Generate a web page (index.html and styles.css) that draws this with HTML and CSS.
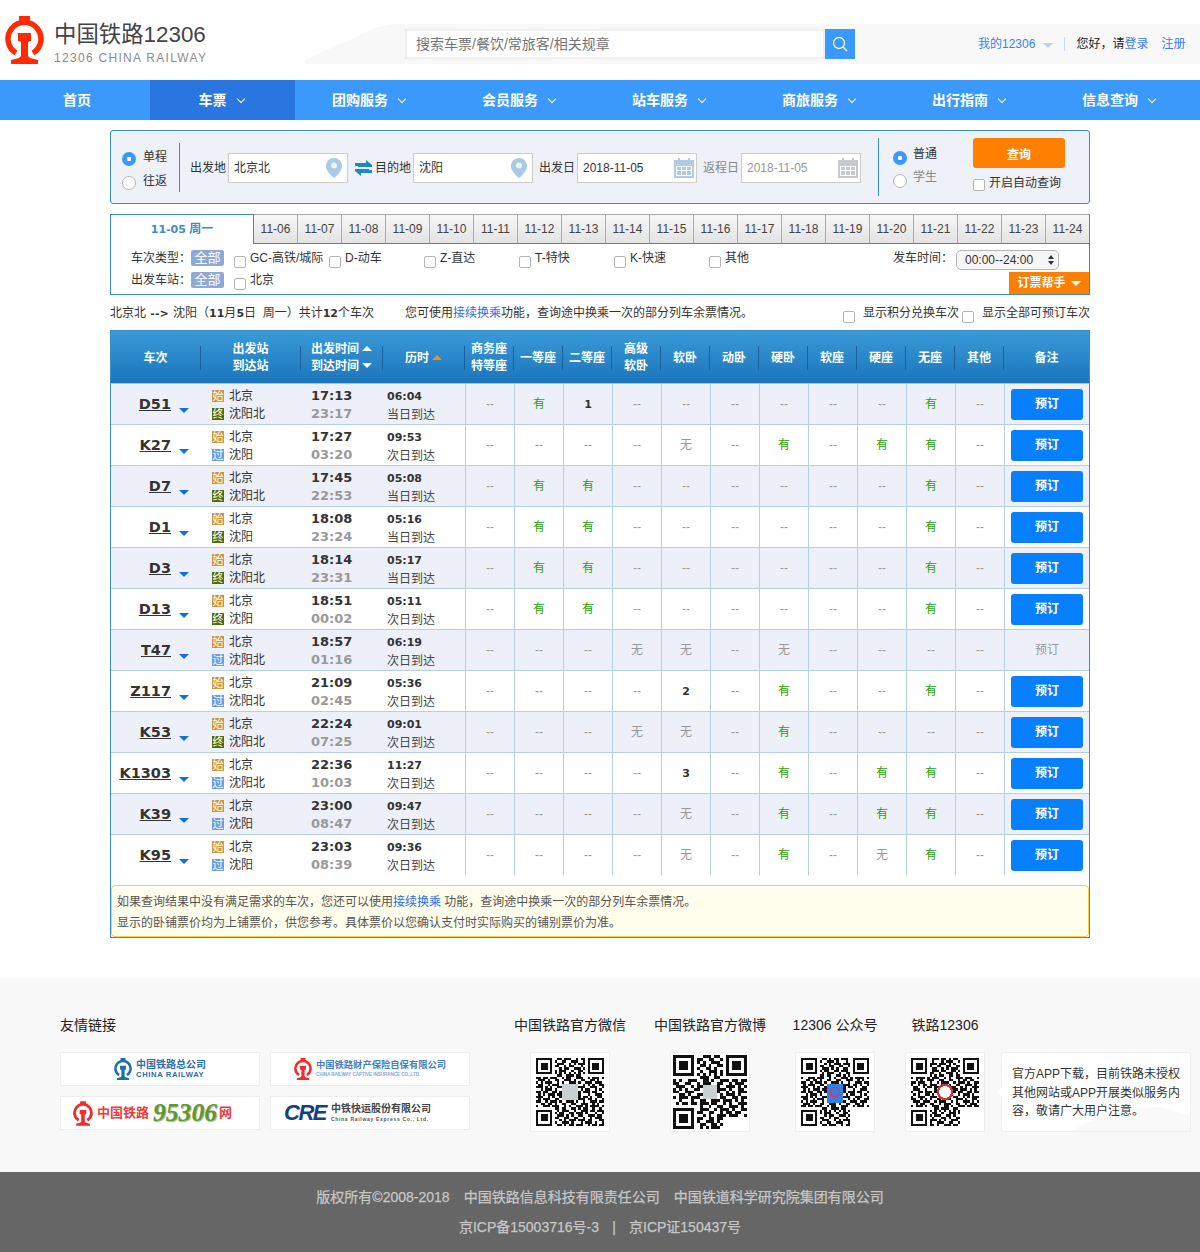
FILE: index.html
```html
<!DOCTYPE html>
<html lang="zh-CN">
<head>
<meta charset="utf-8">
<title>中国铁路12306</title>
<link rel="stylesheet" href="styles.css">
</head>
<body>
<svg class="defs" width="0" height="0" aria-hidden="true">
  <defs>
    <symbol id="ring" viewBox="0 0 39 48">
      <path d="M11 37A16.5 16.5 0 1 1 28 37" fill="none" stroke="currentColor" stroke-width="5.5"/>
      <path d="M14 0h11v6h-11z M13 17h13v8l-3 1v14l2 2 8 2v4h-27v-4l8-2 2-2v-14l-3-1z" fill="currentColor"/>
    </symbol>
    <g id="finder">
      <rect x="-1" y="-1" width="9" height="9" fill="#fff"/>
      <path d="M0 0h7v7h-7z M1 1v5h5v-5z M2 2h3v3h-3z" fill="#111" fill-rule="evenodd"/>
    </g>
    <path id="qrdata" fill="none" stroke="#111" stroke-width="1" d="M9 .5h2M12 .5h3M17 .5h1M19 .5h2M8 1.5h1M11 1.5h2M15 1.5h3M20 1.5h1M9 2.5h3M14 2.5h1M16 2.5h1M18 2.5h3M8 3.5h2M12 3.5h1M14 3.5h2M19 3.5h1M10 4.5h1M12 4.5h2M16 4.5h3M20 4.5h1M8 5.5h1M10 5.5h3M15 5.5h1M18 5.5h2M8 6.5h1M10 6.5h1M12 6.5h1M14 6.5h1M16 6.5h1M18 6.5h1M20 6.5h1M9 7.5h2M13 7.5h3M17 7.5h2M0 8.5h2M3 8.5h2M6 8.5h3M11 8.5h1M13 8.5h2M17 8.5h3M22 8.5h1M24 8.5h3M28 8.5h1M1 9.5h3M5 9.5h1M8 9.5h2M12 9.5h3M16 9.5h1M19 9.5h2M23 9.5h2M26 9.5h1M0 10.5h1M2 10.5h1M4 10.5h3M9 10.5h1M11 10.5h1M14 10.5h3M18 10.5h1M21 10.5h3M25 10.5h3M1 11.5h2M5 11.5h1M7 11.5h3M12 11.5h2M16 11.5h2M20 11.5h1M22 11.5h1M24 11.5h1M27 11.5h2M0 12.5h3M4 12.5h1M6 12.5h1M9 12.5h2M14 12.5h1M18 12.5h3M23 12.5h3M28 12.5h1M2 13.5h1M4 13.5h3M8 13.5h1M11 13.5h3M15 13.5h2M19 13.5h1M21 13.5h2M25 13.5h1M27 13.5h1M0 14.5h2M3 14.5h2M7 14.5h2M10 14.5h1M13 14.5h1M16 14.5h3M20 14.5h3M24 14.5h2M28 14.5h1M1 15.5h1M3 15.5h1M5 15.5h3M9 15.5h3M14 15.5h2M18 15.5h1M22 15.5h1M25 15.5h3M0 16.5h3M5 16.5h1M7 16.5h1M10 16.5h2M13 16.5h3M17 16.5h2M20 16.5h2M23 16.5h1M26 16.5h2M1 17.5h1M3 17.5h3M8 17.5h2M12 17.5h1M15 17.5h1M18 17.5h3M22 17.5h2M25 17.5h1M28 17.5h1M0 18.5h2M4 18.5h1M6 18.5h3M10 18.5h1M13 18.5h3M17 18.5h1M20 18.5h1M23 18.5h3M27 18.5h2M2 19.5h2M5 19.5h2M8 19.5h1M11 19.5h2M15 19.5h2M19 19.5h3M24 19.5h1M26 19.5h1M0 20.5h1M3 20.5h3M7 20.5h3M12 20.5h1M14 20.5h1M17 20.5h3M21 20.5h1M23 20.5h4M28 20.5h1M8 21.5h2M11 21.5h2M15 21.5h2M18 21.5h1M20 21.5h2M24 21.5h1M27 21.5h1M9 22.5h1M11 22.5h3M16 22.5h1M19 22.5h3M23 22.5h2M26 22.5h3M8 23.5h1M10 23.5h2M14 23.5h2M17 23.5h3M21 23.5h1M25 23.5h1M28 23.5h1M9 24.5h3M13 24.5h1M15 24.5h1M18 24.5h2M22 24.5h3M26 24.5h2M8 25.5h2M12 25.5h2M16 25.5h2M20 25.5h1M23 25.5h1M25 25.5h3M10 26.5h1M12 26.5h1M14 26.5h3M18 26.5h3M22 26.5h2M27 26.5h2M8 27.5h1M11 27.5h3M15 27.5h1M19 27.5h1M21 27.5h3M25 27.5h1M28 27.5h1M9 28.5h2M12 28.5h1M14 28.5h2M17 28.5h3M22 28.5h1M24 28.5h2M27 28.5h2"/>
    <symbol id="pin" viewBox="0 0 16 20">
      <path d="M8 0a8 8 0 0 1 8 8c0 4-4 9-8 12-4-3-8-8-8-12a8 8 0 0 1 8-8z" fill="#a9c9e4"/>
      <circle cx="8" cy="7.5" r="3" fill="#eef1f8"/>
    </symbol>
    <symbol id="cal" viewBox="0 0 20 20">
      <path d="M0 2h4v-2h2v2h8v-2h2v2h4v18h-20z" fill="currentColor"/>
      <path d="M2 8h16v10h-16z" fill="#fff"/>
      <path d="M3 9h4v3h-4zM8 9h4v3h-4zM13 9h4v3h-4zM3 13h4v4h-4zM8 13h4v4h-4zM13 13h4v4h-4z" fill="currentColor"/>
    </symbol>
  </defs>
</svg>

<header class="site-head">
  <div class="brand">
    <svg class="brand-mark"><use href="#ring"/></svg>
    <div class="brand-text">
      <div class="brand-cn">中国铁路12306</div>
      <div class="brand-en">12306 CHINA RAILWAY</div>
    </div>
  </div>
  <div class="band">
    <div class="search">
      <div class="search-input">搜索车票/餐饮/常旅客/相关规章</div>
      <div class="search-btn">
        <svg width="16" height="16" viewBox="0 0 16 16" fill="none" stroke="#fff" stroke-width="1.3"><circle cx="7" cy="7" r="5.5"/><path d="M11 11l4 4"/></svg>
      </div>
    </div>
    <div class="user-links">
      <a class="link">我的12306</a><i class="my-caret"></i><i class="user-sep"></i>
      <span class="hello">您好，请</span><a class="link">登录</a><a class="link reg">注册</a>
    </div>
  </div>
</header>

<nav class="nav">
  <a class="nav-item nav-home">首页</a>
  <a class="nav-item nav-ticket active">车票<i class="chev"></i></a>
  <a class="nav-item">团购服务<i class="chev"></i></a>
  <a class="nav-item">会员服务<i class="chev"></i></a>
  <a class="nav-item">站车服务<i class="chev"></i></a>
  <a class="nav-item">商旅服务<i class="chev"></i></a>
  <a class="nav-item">出行指南<i class="chev"></i></a>
  <a class="nav-item">信息查询<i class="chev"></i></a>
</nav>

<main class="main">
  <section class="panel">
    <div class="trip">
      <label class="opt"><input type="radio" name="trip" checked>单程</label>
      <label class="opt"><input type="radio" name="trip">往返</label>
    </div>
    <i class="vline v1"></i>
    <span class="f-label from">出发地</span>
    <div class="field"><span>北京北</span><svg class="pin"><use href="#pin"/></svg></div>
    <svg class="swap" width="17" height="16" viewBox="0 0 17 16"><path d="M0 6V3h11V0l6 5v2H3v-1zM17 10v3H6v3l-6-5V9h14v1z" fill="#1b8cc0"/></svg>
    <span class="f-label to">目的地</span>
    <div class="field"><span>沈阳</span><svg class="pin"><use href="#pin"/></svg></div>
    <span class="f-label date">出发日</span>
    <div class="field"><span>2018-11-05</span><svg class="cal"><use href="#cal"/></svg></div>
    <span class="f-label back muted">返程日</span>
    <div class="field off"><span>2018-11-05</span><svg class="cal"><use href="#cal"/></svg></div>
    <i class="vline v2"></i>
    <div class="ptype">
      <label class="opt"><input type="radio" name="ptype" checked>普通</label>
      <label class="opt muted"><input type="radio" name="ptype">学生</label>
    </div>
    <div class="query">
      <button class="query-btn" type="button">查询</button>
      <label class="auto"><input type="checkbox">开启自动查询</label>
    </div>
  </section>

  <ul class="tabs">
    <li class="tab current"><b>11-05</b> 周一</li>
    <li class="tab">11-06</li><li class="tab">11-07</li><li class="tab">11-08</li><li class="tab">11-09</li><li class="tab">11-10</li><li class="tab">11-11</li><li class="tab">11-12</li><li class="tab">11-13</li><li class="tab">11-14</li><li class="tab">11-15</li><li class="tab">11-16</li><li class="tab">11-17</li><li class="tab">11-18</li><li class="tab">11-19</li><li class="tab">11-20</li><li class="tab">11-21</li><li class="tab">11-22</li><li class="tab">11-23</li><li class="tab">11-24</li>
  </ul>

  <section class="filters">
    <div class="f-row">
      <span class="f-name">车次类型：</span><span class="all">全部</span>
      <label class="chk"><input type="checkbox">GC-高铁/城际</label>
      <label class="chk"><input type="checkbox">D-动车</label>
      <label class="chk"><input type="checkbox">Z-直达</label>
      <label class="chk"><input type="checkbox">T-特快</label>
      <label class="chk"><input type="checkbox">K-快速</label>
      <label class="chk"><input type="checkbox">其他</label>
      <span class="dep-time">发车时间：</span>
      <div class="time-select">00:00--24:00<i class="updown"></i></div>
    </div>
    <div class="f-row">
      <span class="f-name">出发车站：</span><span class="all">全部</span>
      <label class="chk"><input type="checkbox">北京</label>
      <div class="helper">订票帮手<i class="tri-down"></i></div>
    </div>
  </section>

  <div class="summary">
    <span class="sum-route">北京北 <b class="arrow">--&gt;</b> 沈阳（<b>11</b>月<b>5</b>日&nbsp; 周一）共计<b>12</b>个车次</span>
    <span class="sum-tip">您可使用<a class="link-strong">接续换乘</a>功能，查询途中换乘一次的部分列车余票情况。</span>
    <label class="sum-chk first"><input type="checkbox">显示积分兑换车次</label>
    <label class="sum-chk"><input type="checkbox">显示全部可预订车次</label>
  </div>

  <section class="result">
    <table class="trains">
      <colgroup>
        <col class="c-no"><col class="c-st"><col class="c-tm"><col class="c-tm">
        <col class="c-s"><col class="c-s"><col class="c-s"><col class="c-s"><col class="c-s"><col class="c-s"><col class="c-s"><col class="c-s"><col class="c-s"><col class="c-s"><col class="c-s">
        <col class="c-bk">
      </colgroup>
      <thead>
        <tr>
          <th><div class="th">车次</div></th>
          <th><div class="th">出发站<br>到达站</div></th>
          <th><div class="th"><span>出发时间<i class="t-up"></i><br>到达时间<i class="t-down"></i></span></div></th>
          <th><div class="th"><span>历时<i class="t-up orange"></i></span></div></th>
          <th><div class="th">商务座<br>特等座</div></th>
          <th><div class="th">一等座</div></th>
          <th><div class="th">二等座</div></th>
          <th><div class="th">高级<br>软卧</div></th>
          <th><div class="th">软卧</div></th>
          <th><div class="th">动卧</div></th>
          <th><div class="th">硬卧</div></th>
          <th><div class="th">软座</div></th>
          <th><div class="th">硬座</div></th>
          <th><div class="th">无座</div></th>
          <th><div class="th">其他</div></th>
          <th><div class="th last">备注</div></th>
        </tr>
      </thead>
      <tbody>
        <tr>
          <td class="no"><div class="no-in"><a>D51</a><i class="more"></i></div></td>
          <td class="st"><div><i class="ic shi">始</i>北京</div><div><i class="ic zhong">终</i>沈阳北</div></td>
          <td class="tm"><b>17:13</b><b class="arr">23:17</b></td>
          <td class="du"><b>06:04</b><span>当日到达</span></td>
          <td>--</td><td class="y">有</td><td class="n">1</td><td>--</td><td>--</td><td>--</td><td>--</td><td>--</td><td>--</td><td class="y">有</td><td>--</td>
          <td class="bk"><a class="book">预订</a></td>
        </tr>
        <tr>
          <td class="no"><div class="no-in"><a>K27</a><i class="more"></i></div></td>
          <td class="st"><div><i class="ic shi">始</i>北京</div><div><i class="ic guo">过</i>沈阳</div></td>
          <td class="tm"><b>17:27</b><b class="arr">03:20</b></td>
          <td class="du"><b>09:53</b><span>次日到达</span></td>
          <td>--</td><td>--</td><td>--</td><td>--</td><td class="w">无</td><td>--</td><td class="y">有</td><td>--</td><td class="y">有</td><td class="y">有</td><td>--</td>
          <td class="bk"><a class="book">预订</a></td>
        </tr>
        <tr>
          <td class="no"><div class="no-in"><a>D7</a><i class="more"></i></div></td>
          <td class="st"><div><i class="ic shi">始</i>北京</div><div><i class="ic zhong">终</i>沈阳北</div></td>
          <td class="tm"><b>17:45</b><b class="arr">22:53</b></td>
          <td class="du"><b>05:08</b><span>当日到达</span></td>
          <td>--</td><td class="y">有</td><td class="y">有</td><td>--</td><td>--</td><td>--</td><td>--</td><td>--</td><td>--</td><td class="y">有</td><td>--</td>
          <td class="bk"><a class="book">预订</a></td>
        </tr>
        <tr>
          <td class="no"><div class="no-in"><a>D1</a><i class="more"></i></div></td>
          <td class="st"><div><i class="ic shi">始</i>北京</div><div><i class="ic zhong">终</i>沈阳</div></td>
          <td class="tm"><b>18:08</b><b class="arr">23:24</b></td>
          <td class="du"><b>05:16</b><span>当日到达</span></td>
          <td>--</td><td class="y">有</td><td class="y">有</td><td>--</td><td>--</td><td>--</td><td>--</td><td>--</td><td>--</td><td class="y">有</td><td>--</td>
          <td class="bk"><a class="book">预订</a></td>
        </tr>
        <tr>
          <td class="no"><div class="no-in"><a>D3</a><i class="more"></i></div></td>
          <td class="st"><div><i class="ic shi">始</i>北京</div><div><i class="ic zhong">终</i>沈阳北</div></td>
          <td class="tm"><b>18:14</b><b class="arr">23:31</b></td>
          <td class="du"><b>05:17</b><span>当日到达</span></td>
          <td>--</td><td class="y">有</td><td class="y">有</td><td>--</td><td>--</td><td>--</td><td>--</td><td>--</td><td>--</td><td class="y">有</td><td>--</td>
          <td class="bk"><a class="book">预订</a></td>
        </tr>
        <tr>
          <td class="no"><div class="no-in"><a>D13</a><i class="more"></i></div></td>
          <td class="st"><div><i class="ic shi">始</i>北京</div><div><i class="ic zhong">终</i>沈阳</div></td>
          <td class="tm"><b>18:51</b><b class="arr">00:02</b></td>
          <td class="du"><b>05:11</b><span>次日到达</span></td>
          <td>--</td><td class="y">有</td><td class="y">有</td><td>--</td><td>--</td><td>--</td><td>--</td><td>--</td><td>--</td><td class="y">有</td><td>--</td>
          <td class="bk"><a class="book">预订</a></td>
        </tr>
        <tr>
          <td class="no"><div class="no-in"><a>T47</a><i class="more"></i></div></td>
          <td class="st"><div><i class="ic shi">始</i>北京</div><div><i class="ic guo">过</i>沈阳北</div></td>
          <td class="tm"><b>18:57</b><b class="arr">01:16</b></td>
          <td class="du"><b>06:19</b><span>次日到达</span></td>
          <td>--</td><td>--</td><td>--</td><td class="w">无</td><td class="w">无</td><td>--</td><td class="w">无</td><td>--</td><td>--</td><td>--</td><td>--</td>
          <td class="bk"><span class="book-off">预订</span></td>
        </tr>
        <tr>
          <td class="no"><div class="no-in"><a>Z117</a><i class="more"></i></div></td>
          <td class="st"><div><i class="ic shi">始</i>北京</div><div><i class="ic guo">过</i>沈阳北</div></td>
          <td class="tm"><b>21:09</b><b class="arr">02:45</b></td>
          <td class="du"><b>05:36</b><span>次日到达</span></td>
          <td>--</td><td>--</td><td>--</td><td>--</td><td class="n">2</td><td>--</td><td class="y">有</td><td>--</td><td>--</td><td class="y">有</td><td>--</td>
          <td class="bk"><a class="book">预订</a></td>
        </tr>
        <tr>
          <td class="no"><div class="no-in"><a>K53</a><i class="more"></i></div></td>
          <td class="st"><div><i class="ic shi">始</i>北京</div><div><i class="ic zhong">终</i>沈阳北</div></td>
          <td class="tm"><b>22:24</b><b class="arr">07:25</b></td>
          <td class="du"><b>09:01</b><span>次日到达</span></td>
          <td>--</td><td>--</td><td>--</td><td class="w">无</td><td class="w">无</td><td>--</td><td class="y">有</td><td>--</td><td>--</td><td>--</td><td>--</td>
          <td class="bk"><a class="book">预订</a></td>
        </tr>
        <tr>
          <td class="no"><div class="no-in"><a>K1303</a><i class="more"></i></div></td>
          <td class="st"><div><i class="ic shi">始</i>北京</div><div><i class="ic guo">过</i>沈阳北</div></td>
          <td class="tm"><b>22:36</b><b class="arr">10:03</b></td>
          <td class="du"><b>11:27</b><span>次日到达</span></td>
          <td>--</td><td>--</td><td>--</td><td>--</td><td class="n">3</td><td>--</td><td class="y">有</td><td>--</td><td class="y">有</td><td class="y">有</td><td>--</td>
          <td class="bk"><a class="book">预订</a></td>
        </tr>
        <tr>
          <td class="no"><div class="no-in"><a>K39</a><i class="more"></i></div></td>
          <td class="st"><div><i class="ic shi">始</i>北京</div><div><i class="ic guo">过</i>沈阳</div></td>
          <td class="tm"><b>23:00</b><b class="arr">08:47</b></td>
          <td class="du"><b>09:47</b><span>次日到达</span></td>
          <td>--</td><td>--</td><td>--</td><td>--</td><td class="w">无</td><td>--</td><td class="y">有</td><td>--</td><td class="y">有</td><td class="y">有</td><td>--</td>
          <td class="bk"><a class="book">预订</a></td>
        </tr>
        <tr>
          <td class="no"><div class="no-in"><a>K95</a><i class="more"></i></div></td>
          <td class="st"><div><i class="ic shi">始</i>北京</div><div><i class="ic guo">过</i>沈阳</div></td>
          <td class="tm"><b>23:03</b><b class="arr">08:39</b></td>
          <td class="du"><b>09:36</b><span>次日到达</span></td>
          <td>--</td><td>--</td><td>--</td><td>--</td><td class="w">无</td><td>--</td><td class="y">有</td><td>--</td><td class="w">无</td><td class="y">有</td><td>--</td>
          <td class="bk"><a class="book">预订</a></td>
        </tr>
      </tbody>
    </table>
    <div class="notice">
      <p>如果查询结果中没有满足需求的车次，您还可以使用<a class="link-strong">接续换乘</a> 功能，查询途中换乘一次的部分列车余票情况。</p>
      <p>显示的卧铺票价均为上铺票价，供您参考。具体票价以您确认支付时实际购买的铺别票价为准。</p>
    </div>
  </section>
</main>

<footer class="foot">
  <div class="foot-top">
    <div class="friends">
      <h3 class="foot-title">友情链接</h3>
      <div class="friend-grid">
        <a class="friend">
          <svg class="fr-ring blue"><use href="#ring"/></svg>
          <span class="fr-text"><b class="fr-a">中国铁路总公司</b><b class="fr-b">CHINA RAILWAY</b></span>
        </a>
        <a class="friend">
          <svg class="fr-ring red"><use href="#ring"/></svg>
          <span class="fr-text"><b class="fr-c">中国铁路财产保险自保有限公司</b><b class="fr-d">CHINA RAILWAY CAPTIVE INSURANCE CO.,LTD.</b></span>
        </a>
        <a class="friend fr-left-a">
          <svg class="fr-ring red big"><use href="#ring"/></svg>
          <b class="fr-e">中国铁路</b><b class="fr-f">95306</b><b class="fr-g">网</b>
        </a>
        <a class="friend fr-left-b">
          <b class="fr-h">CRE</b>
          <span class="fr-text"><b class="fr-i">中铁快运股份有限公司</b><b class="fr-j">China Railway Express Co., Ltd.</b></span>
        </a>
      </div>
    </div>
    <div class="qr-col col-a">
      <h3 class="foot-title">中国铁路官方微信</h3>
      <div class="qr">
        <svg viewBox="0 0 29 29" shape-rendering="crispEdges"><use href="#qrdata"/><use href="#finder"/><use href="#finder" x="22"/><use href="#finder" y="22"/><rect x="11" y="11" width="7" height="7" fill="#c9d0d2"/></svg>
      </div>
    </div>
    <div class="qr-col col-b">
      <h3 class="foot-title">中国铁路官方微博</h3>
      <div class="qr">
        <svg viewBox="0 0 25 25" shape-rendering="crispEdges"><use href="#qrdata" transform="translate(25 0) scale(-1 1)"/><use href="#finder"/><use href="#finder" x="18"/><use href="#finder" y="18"/><rect x="10" y="10" width="5" height="5" fill="#c9d0d2"/></svg>
      </div>
    </div>
    <div class="qr-col col-c">
      <h3 class="foot-title">12306 公众号</h3>
      <div class="qr">
        <svg viewBox="0 0 29 29" shape-rendering="crispEdges"><use href="#qrdata" transform="translate(0 29) scale(1 -1)"/><use href="#finder"/><use href="#finder" x="22"/><use href="#finder" y="22"/><rect x="11" y="11" width="7" height="8" fill="#2f80e8"/><circle cx="14.5" cy="14.5" r="2" fill="none" stroke="#e33" stroke-width=".7"/></svg>
      </div>
    </div>
    <div class="qr-col col-d">
      <h3 class="foot-title">铁路12306</h3>
      <div class="qr">
        <svg viewBox="0 0 29 29" shape-rendering="crispEdges"><use href="#qrdata" transform="translate(29 29) scale(-1 -1)"/><use href="#finder"/><use href="#finder" x="22"/><use href="#finder" y="22"/><circle cx="14.5" cy="14.5" r="3" fill="#fff" stroke="#d33" stroke-width="1"/></svg>
      </div>
    </div>
    <div class="app-note">官方APP下载，目前铁路未授权其他网站或APP开展类似服务内容，敬请广大用户注意。</div>
  </div>
  <div class="foot-bottom">
    <p>版权所有©2008-2018<span class="gap"></span>中国铁路信息科技有限责任公司<span class="gap"></span>中国铁道科学研究院集团有限公司</p>
    <p>京ICP备15003716号-3<span class="gap bar">|</span>京ICP证150437号</p>
  </div>
</footer>
</body>
</html>
```

FILE: styles.css
```css
* { box-sizing: border-box; }
html, body { margin: 0; padding: 0; }
body {
  width: 1200px;
  background: #fff;
  color: #333;
  font: 12px/1.2 "Liberation Sans", "Noto Sans CJK SC", sans-serif;
}
a { text-decoration: none; color: inherit; }
i { font-style: normal; }
p, h3, ul { margin: 0; padding: 0; }
ul { list-style: none; }
.defs { display: block; height: 0; }

/* checkbox and radio look */
input[type="checkbox"], input[type="radio"] {
  appearance: none;
  margin: 0;
  flex: none;
  width: 12px;
  height: 12px;
  background: #fff;
  border: 1px solid #b5b5b5;
  border-radius: 2px;
}
input[type="radio"] {
  width: 14px;
  height: 14px;
  border-radius: 50%;
}
input[type="radio"]:checked {
  border: 0;
  background: radial-gradient(circle, #fff 0 2px, #3b99fc 2.5px);
}

/* header */
.site-head { display: flex; height: 80px; }
.brand { display: flex; flex: none; width: 305px; padding: 16px 0 0 5px; }
.brand-mark { width: 39px; height: 48px; color: #ff2a00; margin-right: 10px; flex: none; }
.brand-cn { font-size: 22.4px; line-height: 30px; margin-top: 4px; color: #444; }
.brand-en { font-size: 12px; line-height: 14px; margin-top: 1px; letter-spacing: 1.3px; color: #8c8c8c; white-space: nowrap; }
.band {
  flex: 1;
  display: flex;
  align-items: center;
  height: 40px;
  margin-top: 24px;
  background: #f8f8f8;
  clip-path: polygon(0 100%, 0 90%, 72px 8%, 90px 0, 100% 0, 100% 100%);
}
.search { display: flex; margin-left: 100px; }
.search-input {
  width: 420px;
  height: 30px;
  padding-left: 9px;
  border: 2px solid #f0f0f0;
  background: #fff;
  color: #757575;
  font-size: 14px;
  line-height: 26px;
}
.search-btn {
  width: 30px;
  height: 30px;
  background: #3b99fc;
  display: flex;
  align-items: center;
  justify-content: center;
}
.user-links { display: flex; align-items: center; margin-left: 123px; white-space: nowrap; }
.link { color: #3b7ff0; }
.my-caret {
  width: 0; height: 0;
  margin: 3px 11px 0 8px;
  border: 5px solid transparent;
  border-top: 5px solid #b4d3f5;
  border-bottom: 0;
}
.user-sep { width: 1px; height: 14px; background: #c4d8ee; margin-right: 11px; }
.hello { color: #222; }
.reg { margin-left: 13px; }

/* nav */
.nav { display: flex; height: 40px; background: #3b99fc; }
.nav-item {
  width: 150px;
  display: flex;
  align-items: center;
  justify-content: center;
  color: #fff;
  font-size: 14px;
  font-weight: 700;
}
.nav-home { padding-left: 4px; }
.nav-ticket { width: 145px; }
.active { background: #2a76e0; }
.chev {
  width: 6px;
  height: 6px;
  margin: -3px 3px 0 11px;
  border-right: 1px solid #fff;
  border-bottom: 1px solid #fff;
  transform: rotate(45deg);
}

/* search panel */
.main { width: 980px; margin: 0 auto; padding-top: 10px; }
.panel {
  display: flex;
  align-items: center;
  height: 74px;
  border: 1px solid #3a8ec8;
  border-radius: 3px;
  background: #eef1f8;
  padding: 2px 0 0 11px;
}
.trip, .ptype { display: flex; flex-direction: column; gap: 10px; }
.trip { margin-top: 2px; }
.ptype { gap: 9px; margin-bottom: 5px; }
.opt { display: flex; align-items: center; gap: 7px; height: 14px; }
.opt input { margin-top: 4px; }
.ptype .opt { gap: 6px; }
.ptype .opt input { margin-top: 7px; }
.vline { flex: none; width: 1px; background: #3a8ec8; }
.v1 { height: 49px; margin: -2px 10px 0 12px; }
.v2 { height: 58px; margin: -2px 14px 0 17px; }
.f-label { flex: none; width: 37px; white-space: nowrap; }
.from { margin-right: 1px; }
.to { margin: 0 2px 0 3px; width: 36px; }
.date { margin: 0 1px 0 6px; }
.back { margin: 0 2px 0 6px; width: 36px; }
.muted { color: #888; }
.field {
  flex: none;
  display: flex;
  align-items: center;
  justify-content: space-between;
  width: 120px;
  height: 30px;
  padding: 0 2px 0 5px;
  background: #fff;
  border: 1px solid #ccc;
  color: #333;
}
.off { color: #999; }
.pin { width: 16px; height: 20px; margin-right: 3px; }
.cal { width: 20px; height: 20px; color: #b2cbe2; }
.off .cal { color: #c6c9d0; }
.swap { flex: none; margin-left: 7px; }
.query {
  flex: none;
  align-self: flex-start;
  margin: 5px 0 0 36px;
  display: flex;
  flex-direction: column;
  gap: 7px;
}
.query-btn {
  width: 92px;
  height: 30px;
  border: 0;
  border-radius: 3px;
  background: #ff8000;
  color: #fff;
  font: 700 12px "Liberation Sans", "Noto Sans CJK SC", sans-serif;
}
.auto { display: flex; align-items: center; gap: 4px; white-space: nowrap; }
.auto input { margin-top: 4px; }

/* date tabs */
.tabs { display: flex; height: 30px; margin-top: 10px; }
.tab {
  width: 44px;
  height: 30px;
  line-height: 29px;
  text-align: center;
  color: #444;
  border-top: 1px solid #aaa;
  border-right: 1px solid #aaa;
  border-bottom: 1px solid #3a8ec8;
  background: linear-gradient(#f7f7f7, #e3e3e3);
}
.tab:last-child { border-right: 1px solid #3a8ec8; }
.current {
  width: 144px;
  color: #3a8ec8;
  background: #fff;
  border: 1px solid #3a8ec8;
  border-bottom: 0;
  border-right: 1px solid #3a8ec8;
  font-weight: 700;
}
.current b { font: 700 11px "DejaVu Sans", sans-serif; }

/* filters */
.filters {
  height: 51px;
  padding: 6px 0 0 20px;
  border: 1px solid #3a8ec8;
  border-top: 0;
}
.f-row { display: flex; height: 22px; align-items: flex-start; }
.f-name { flex: none; width: 60px; line-height: 17px; }
.all {
  flex: none;
  width: 33px;
  height: 16px;
  line-height: 16px;
  text-align: center;
  background: #8fa9d6;
  color: #fff;
  border-radius: 2px;
  font-size: 13px;
}
.chk { display: flex; gap: 4px; width: 95px; line-height: 17px; white-space: nowrap; }
.chk input { margin-top: 6px; }
.all + .chk { margin-left: 10px; }
.dep-time { margin-left: auto; line-height: 17px; width: 63px; flex: none; }
.time-select {
  position: relative;
  width: 103px;
  height: 20px;
  margin-right: 30px;
  padding-left: 8px;
  border: 1px solid #b5b5b5;
  border-radius: 5px;
  background: #f6f6f6;
  line-height: 18px;
  color: #333;
}
.updown {
  position: absolute;
  right: 4px;
  top: 4px;
  width: 0;
  height: 10px;
  border: 3px solid transparent;
  border-top: 0;
  border-bottom: 0;
}
.updown::before, .updown::after {
  content: "";
  position: absolute;
  left: -3px;
  border: 3px solid transparent;
}
.updown::before { top: 0; border-top: 0; border-bottom: 4px solid #333; }
.updown::after { bottom: 0; border-bottom: 0; border-top: 4px solid #333; }
.helper {
  margin-left: auto;
  width: 80px;
  height: 22px;
  background: #ff8000;
  color: #fff;
  font-weight: 700;
  display: flex;
  align-items: center;
  justify-content: center;
}
.tri-down {
  margin-left: 5px;
  border: 5px solid transparent;
  border-top: 5px solid #fff;
  border-bottom: 0;
}

/* summary line */
.summary { display: flex; align-items: center; height: 35px; padding-top: 2px; color: #333; white-space: nowrap; }
.sum-route { width: 295px; flex: none; }
.sum-route b { font: 700 11px "DejaVu Sans", sans-serif; }
.sum-route .arrow { margin: 0 1px; }
.link-strong { color: #1f6ff0; }
.sum-chk { display: flex; align-items: center; gap: 8px; }
.sum-chk input { margin-top: 7px; }
.first { margin-left: auto; margin-right: 3px; }

/* results */
.result { border: 1px solid #3a8ec8; height: 608px; }
.trains {
  width: 978px;
  table-layout: fixed;
  border-collapse: separate;
  border-spacing: 0;
}
.c-no { width: 90px; }
.c-st { width: 100px; }
.c-tm { width: 82px; }
.c-s { width: 49px; }
.c-bk { width: 85px; }
.trains th {
  height: 53px;
  padding: 2px 0 0;
  color: #fff;
  background: linear-gradient(#3a9ad8, #1b75bb);
  border-bottom: 1px solid #9cc6e6;
  font-size: 12px;
  font-weight: 700;
}
.th {
  height: 24px;
  display: flex;
  flex-direction: column;
  justify-content: center;
  line-height: 17px;
  text-align: center;
  border-right: 1px solid #1d5f9b;
  white-space: nowrap;
}
.last { border-right: 0; }
.t-up, .t-down {
  display: inline-block;
  vertical-align: 2px;
  margin-left: 3px;
  border: 5px solid transparent;
}
.t-up { border-top: 0; border-bottom: 5px solid #fff; }
.t-down { border-bottom: 0; border-top: 5px solid #fff; }
.t-up.orange { border-bottom-color: #f28c28; }
.trains td {
  height: 41px;
  padding: 0;
  text-align: center;
  color: #999;
  border-bottom: 1px solid #b5d0e0;
  border-left: 1px solid #b5d0e0;
}
.trains tbody tr:nth-child(odd) td { background: #edf0f8; }
.trains tbody tr:last-child td { border-bottom: 1px solid #fff; }
.trains td.no, .trains td.st, .trains td.tm, .trains td.du { border-left: 0; text-align: left; color: #333; }
.no-in { display: flex; align-items: center; justify-content: flex-end; padding-right: 12px; }
.no-in a {
  font: 700 14.5px "DejaVu Sans", sans-serif;
  color: #333;
  text-decoration: underline;
}
.more {
  margin: 13px 0 0 8px;
  border: 5px solid transparent;
  border-top: 5px solid #0d6fe0;
  border-bottom: 0;
}
.trains td.st { padding: 2px 0 0 11px; line-height: 18px; }
.st div { display: flex; align-items: center; gap: 5px; height: 18px; }
.ic {
  width: 12px;
  height: 12px;
  flex: none;
  line-height: 12px;
  text-align: center;
  font-size: 11px;
  color: #fff;
}
.shi { background: #cc9440; }
.zhong { background: #4d6d06; }
.guo { background: #6f9be0; }
.trains td.tm { padding: 2px 0 0 10px; }
.tm b { display: block; font: 700 13px/18px "DejaVu Sans", sans-serif; color: #333; }
.tm .arr { color: #999; }
.trains td.du { padding: 4px 0 0 4px; }
.du b { display: block; font: 700 11px/18px "DejaVu Sans", sans-serif; color: #333; }
.du span { display: block; line-height: 18px; color: #444; }
.trains td.y { color: #26a306; }
.trains td.n { color: #333; font: 700 11px "DejaVu Sans", sans-serif; }
.bk { vertical-align: middle; }
.book {
  display: block;
  width: 72px;
  height: 31px;
  margin: 0 auto;
  line-height: 31px;
  border-radius: 3px;
  background: #0680ff;
  color: #fff;
  font-weight: 700;
}
.book-off { color: #999; }
.notice {
  margin-top: 9px;
  height: 52px;
  padding: 6px 0 0 5px;
  border: 1px solid #f5d24a;
  border-radius: 4px;
  background: #fffdeb;
  color: #555;
  line-height: 21px;
}

/* footer */
.foot { margin-top: 40px; }
.foot-top {
  display: flex;
  height: 194px;
  padding-top: 39px;
  background: #f8f8f8;
}
.foot-title { font-size: 14px; font-weight: 400; line-height: 17px; color: #222; white-space: nowrap; }
.friends { width: 410px; margin-left: 60px; flex: none; }
.friend-grid { display: grid; grid-template-columns: 200px 200px; gap: 10px; margin-top: 18px; }
.friend {
  display: flex;
  align-items: center;
  justify-content: center;
  height: 34px;
  background: #fff;
  border: 1px solid #eee;
  white-space: nowrap;
}
.fr-left-a, .fr-left-b { justify-content: flex-start; }
.fr-left-a { padding-left: 12px; }
.fr-left-b { padding-left: 13px; }
.fr-ring { width: 18px; height: 22px; margin-right: 4px; flex: none; }
.blue { color: #1f6eb0; }
.red { color: #f02c2c; }
.big { width: 20px; height: 25px; }
.fr-text { display: flex; flex-direction: column; }
.fr-a { font-size: 10px; line-height: 11px; color: #2a6eb0; }
.fr-b { font-size: 7.7px; line-height: 10px; color: #2a6eb0; letter-spacing: .6px; }
.fr-c { font-size: 9.3px; line-height: 11px; color: #3f80c8; }
.fr-d { font-size: 4.5px; line-height: 8px; color: #7da7d6; }
.fr-e { font-size: 13px; color: #f03a3a; }
.fr-f {
  font: italic 700 25.6px "Liberation Serif", serif;
  color: #5d9a2b;
  margin: 0 2px 0 4px;
  text-shadow: 1px 1px 1px #aaa;
}
.fr-g { font-size: 13px; color: #f03a3a; }
.fr-h { font: italic 700 22px "Liberation Sans", sans-serif; color: #153f82; letter-spacing: -1.5px; margin-right: 5px; }
.fr-i { font-size: 10px; line-height: 12px; color: #444; }
.fr-j { font-size: 5px; line-height: 8px; color: #555; letter-spacing: .7px; }
.qr-col { flex: none; display: flex; flex-direction: column; align-items: center; }
.col-a { margin-left: 45px; width: 110px; }
.col-b { margin-left: 30px; width: 110px; }
.col-c { margin-left: 28px; width: 84px; }
.col-d { margin-left: 35px; width: 66px; }
.qr {
  width: 80px;
  height: 80px;
  margin-top: 18px;
  padding: 5px;
  background: #fff;
  border: 1px solid #eee;
  flex: none;
}
.qr svg { display: block; width: 100%; height: 100%; }
.col-b .qr { padding: 2px; }
.app-note {
  position: relative;
  z-index: 0;
  flex: none;
  width: 190px;
  height: 80px;
  margin: 35px 0 0 23px;
  padding: 12px 8px 0 10px;
  background: #fff;
  border: 1px solid #eee;
  color: #333;
  line-height: 18.5px;
}
.app-note::before {
  content: "";
  position: absolute;
  left: -5px;
  top: 34px;
  border: 5px solid transparent;
  border-left: 0;
  border-right: 5px solid #fff;
}
.app-note::after {
  content: "";
  position: absolute;
  z-index: -1;
  right: 0;
  bottom: 0;
  width: 120px;
  height: 24px;
  background: #f9f9f9;
  clip-path: polygon(0 100%, 30% 30%, 45% 10%, 75% 0, 100% 35%, 100% 100%);
}
.foot-bottom {
  height: 80px;
  background: #666;
  color: #c6c6c6;
  text-align: center;
  font-size: 14px;
  font-weight: 400;
  -webkit-text-stroke: 0.25px #c6c6c6;
  padding-top: 15px;
  line-height: 20px;
}
.foot-bottom p + p { margin-top: 10px; }
.gap { display: inline-block; width: 14px; }
.bar { width: 30px; color: #bcd; }
```
